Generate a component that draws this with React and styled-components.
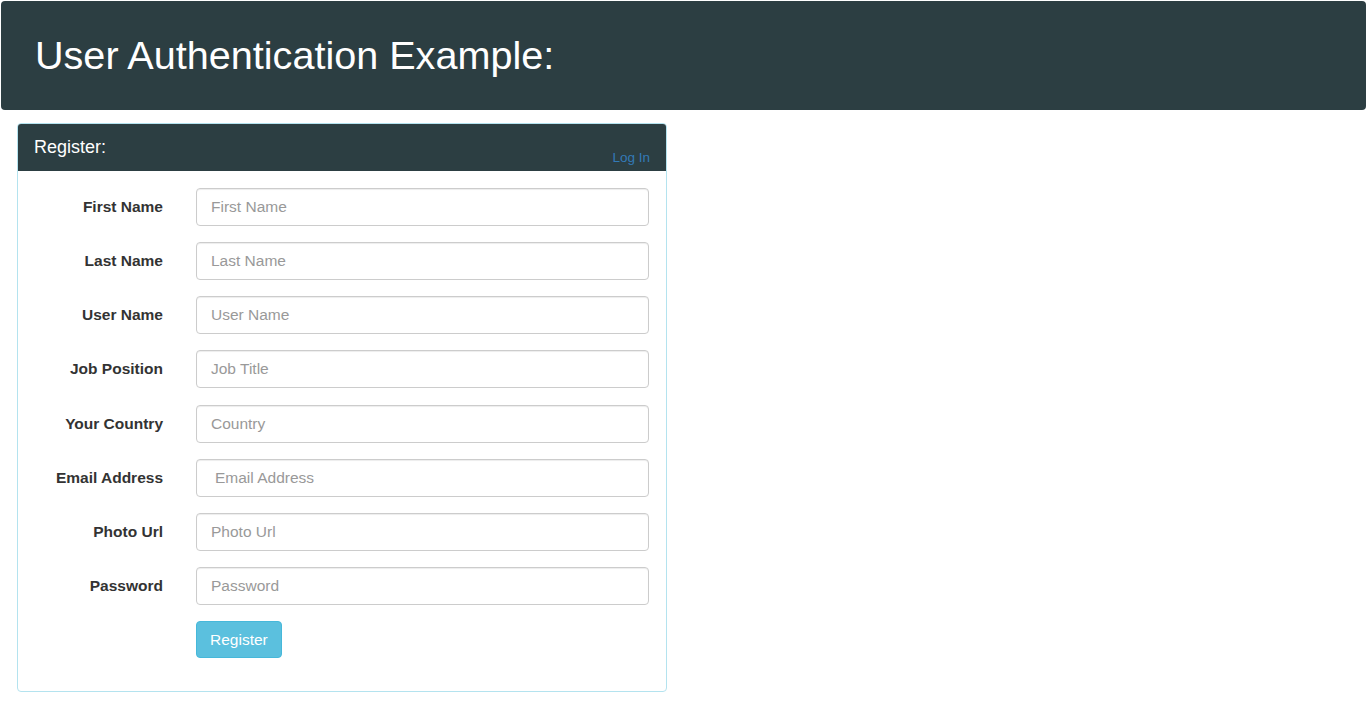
import React from "react";
import styled, { createGlobalStyle } from "styled-components";

const GlobalStyle = createGlobalStyle`
  html, body {
    margin: 0;
    padding: 0;
    background: #fff;
    font-family: "Liberation Sans", Arial, sans-serif;
    color: #333;
  }
  * {
    box-sizing: border-box;
  }
`;

const Page = styled.div`
  padding: 1px 0 0 1px;
`;

const Banner = styled.header`
  background: #2c3e42;
  border-radius: 4px;
  height: 109px;
  padding: 0 34px;
  display: flex;
  align-items: center;

  h1 {
    margin: 0;
    color: #fff;
    font-weight: normal;
    font-size: 39.6px;
  }
`;

const Panel = styled.section`
  width: 650px;
  margin: 13px 0 0 16px;
  border: 1px solid #b4e3ef;
  border-radius: 4px;
  overflow: hidden;
`;

const PanelHeading = styled.div`
  background: #2c3e42;
  height: 47px;
  padding: 0 16px 0 16px;
  display: flex;
  justify-content: space-between;

  h3 {
    margin: 0;
    padding-top: 13px;
    color: #fff;
    font-weight: normal;
    font-size: 18px;
  }

  a {
    align-self: flex-end;
    margin-bottom: 6px;
    font-size: 13.5px;
    color: #337ab7;
    text-decoration: none;
  }
`;

const Form = styled.form`
  padding: 17px 17px 33px 0;
  display: flex;
  flex-direction: column;
  gap: 16.15px;
`;

const Row = styled.div`
  display: grid;
  grid-template-columns: 145px 1fr;
  column-gap: 33px;
  align-items: center;
`;

const Label = styled.label`
  text-align: right;
  font-weight: bold;
  font-size: 15.5px;
  color: #333;
`;

const Input = styled.input`
  height: 38px;
  width: 100%;
  border: 1px solid #ccc;
  border-radius: 4px;
  padding: 0 ${(p) => (p.$wide ? 18 : 14)}px;
  font-family: inherit;
  font-size: 15.5px;
  color: #555;
  box-shadow: inset 0 1px 1px rgba(0, 0, 0, 0.075);

  &::placeholder {
    color: #999;
  }
`;

const Button = styled.button`
  justify-self: start;
  height: 37px;
  padding: 0 13px;
  background: #5bc0de;
  border: 1px solid #46b8da;
  border-radius: 4px;
  color: #fff;
  font-family: inherit;
  font-size: 15.5px;
`;

const fields = [
  ["First Name", "First Name"],
  ["Last Name", "Last Name"],
  ["User Name", "User Name"],
  ["Job Position", "Job Title"],
  ["Your Country", "Country"],
  ["Email Address", "Email Address", true],
  ["Photo Url", "Photo Url"],
  ["Password", "Password"],
];

export default function App() {
  return (
    <Page>
      <GlobalStyle />
      <Banner>
        <h1>User Authentication Example:</h1>
      </Banner>
      <Panel>
        <PanelHeading>
          <h3>Register:</h3>
          <a href="#">Log In</a>
        </PanelHeading>
        <Form onSubmit={(e) => e.preventDefault()}>
          {fields.map(([label, placeholder, wide]) => (
            <Row key={label}>
              <Label>{label}</Label>
              <Input
                placeholder={placeholder}
                $wide={wide}
                type={label === "Password" ? "password" : "text"}
              />
            </Row>
          ))}
          <Row>
            <span />
            <Button type="submit">Register</Button>
          </Row>
        </Form>
      </Panel>
    </Page>
  );
}
